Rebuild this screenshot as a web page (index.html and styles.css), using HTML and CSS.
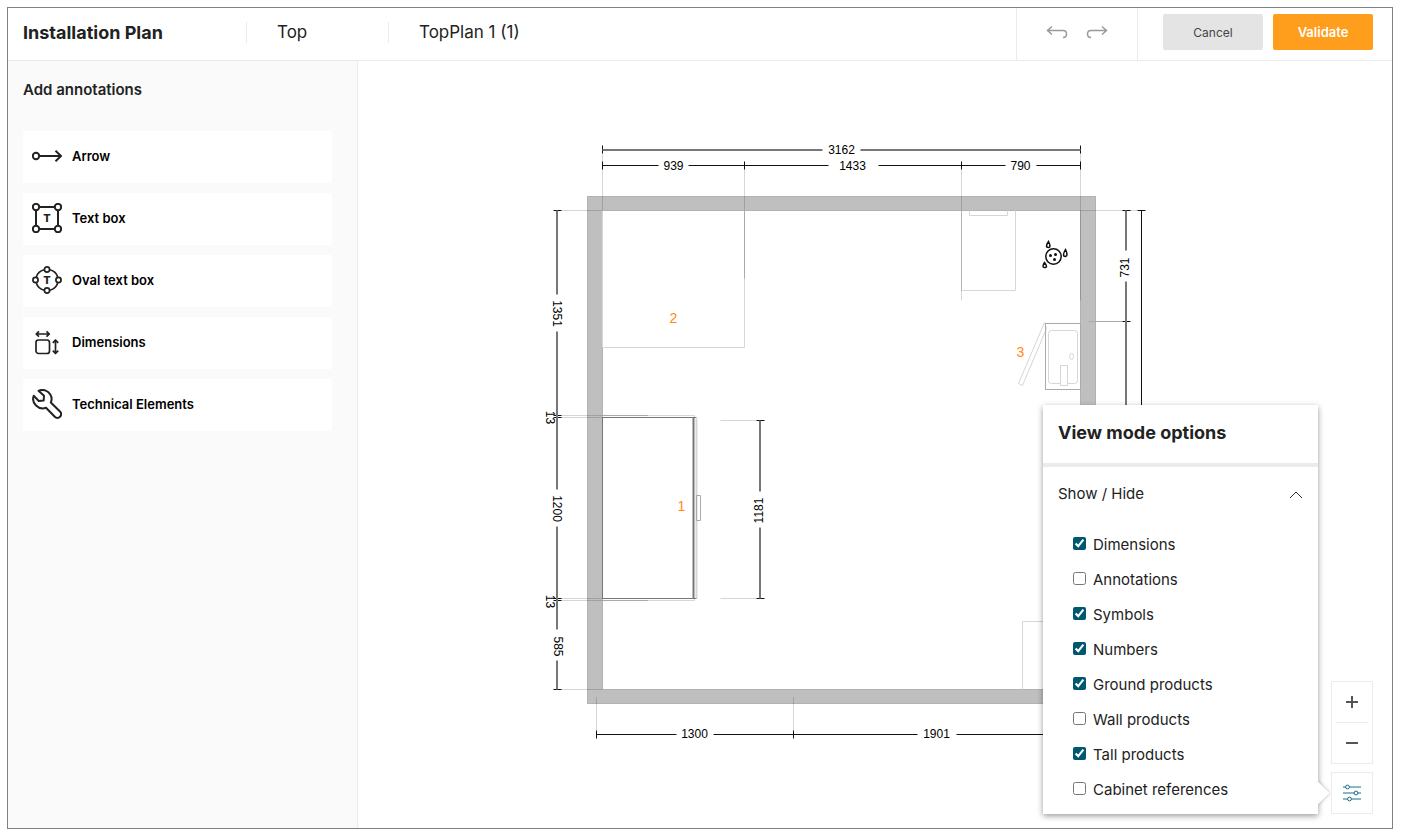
FILE: index.html
```html
<!DOCTYPE html>
<html lang="en">
<head>
    <meta charset="UTF-8">
    <meta name="viewport" content="width=device-width, initial-scale=1.0">
    <title>Installation Plan</title>
    <link rel="stylesheet" href="styles.css">
</head>
<body>
    <div class="app">
        <header class="topbar">
            <h1 class="topbar-title">Installation Plan</h1>
            <div class="topbar-view">Top</div>
            <div class="topbar-name">TopPlan 1 (1)</div>
            <div class="history">
                <button class="icon-btn" aria-label="Undo">
                    <svg width="22" height="14" viewBox="0 0 22 14"><path d="M6 1.500 L1.500 5.500 L6 9.500 M1.500 5.500 H17 Q20.500 5.500 20.500 9 Q20.500 12.500 17 12.500"/></svg>
                </button>
                <button class="icon-btn" aria-label="Redo">
                    <svg width="22" height="14" viewBox="0 0 22 14"><path d="M16 1.500 L20.500 5.500 L16 9.500 M20.500 5.500 H5 Q1.500 5.500 1.500 9 Q1.500 12.500 5 12.500"/></svg>
                </button>
            </div>
            <div class="actions">
                <button class="btn btn-cancel">Cancel</button>
                <button class="btn btn-validate">Validate</button>
            </div>
        </header>

        <div class="content">
            <aside class="sidebar">
                <h2>Add annotations</h2>
                <button class="tool">
                    <svg width="30" height="30" viewBox="0 0 30 30"><circle cx="4" cy="15" r="3.200"/><path d="M7.500 15 H29 M23.500 9.800 L29 15 L23.500 20.200"/></svg>
                    Arrow
                </button>
                <button class="tool">
                    <svg width="30" height="30" viewBox="0 0 30 30"><path d="M7.500 4 H22.500 M7.500 26 H22.500 M4 7.500 V22.500 M26 7.500 V22.500"/><circle cx="4" cy="4" r="3.200"/><circle cx="26" cy="4" r="3.200"/><circle cx="4" cy="26" r="3.200"/><circle cx="26" cy="26" r="3.200"/><text x="15" y="19">T</text></svg>
                    Text box
                </button>
                <button class="tool">
                    <svg width="30" height="30" viewBox="0 0 30 30"><g class="thin"><path d="M12 4.800 A11.500 10.500 0 0 0 4.300 12 M18 4.800 A11.500 10.500 0 0 1 25.700 12 M4.300 18 A11.500 10.500 0 0 0 12 25.200 M25.700 18 A11.500 10.500 0 0 1 18 25.200"/><circle cx="15" cy="4.500" r="2.600"/><circle cx="15" cy="25.500" r="2.600"/><circle cx="3.500" cy="15" r="2.600"/><circle cx="26.500" cy="15" r="2.600"/></g><text x="15" y="19">T</text></svg>
                    Oval text box
                </button>
                <button class="tool">
                    <svg width="30" height="30" viewBox="0 0 30 30"><g class="thin"><rect x="4" y="13" width="13.500" height="13.500" rx="2.500"/><path d="M4.500 7 H17 M7 4.300 L4.200 7 L7 9.700 M14.500 4.300 L17.300 7 L14.500 9.700 M23.500 13.500 V26 M20.800 15.800 L23.500 13 L26.200 15.800 M20.800 23.700 L23.500 26.500 L26.200 23.700"/></g></svg>
                    Dimensions
                </button>
                <button class="tool">
                    <svg width="30" height="30" viewBox="0 0 30 30"><path d="M6.500 1.800 C11 -0.200 16 1.500 18.300 5.500 C20 8.500 19.800 11.500 18.800 13.500 L28 22.500 C29.500 24 29.300 26.300 28 27.800 C26.500 29.300 24.200 29.200 22.800 27.800 L14 18.800 C10.500 20 6.500 19 4 16.500 C1 13.500 0.500 10 1.700 6.800 L6.800 12 L11.700 11.500 L12 6.800 Z"/></svg>
                    Technical Elements
                </button>
            </aside>

            <main class="stage">
                <!-- viewBox starts on a half pixel so that whole coordinates give sharp lines -->
                <svg class="plan" viewBox="357.500 60.500 1034 767" role="img" aria-label="Top view of the room">
                    <rect class="wall" x="594" y="203" width="494" height="493"/>
                    <path class="wall-edge" d="M587 196 H1095 V703 H587 Z M602 210 H1080 V689 H602 Z"/>

                    <!-- products -->
                    <g class="product">
                        <path d="M602 210 V347 H744 V210"/>
                        <path d="M961 210 V290 H1015 V210 M969 210 V215 H1007 V210"/>
                        <path d="M1022 689 V621 H1080"/>
                        <path d="M1044 322 L1046 328 L1022 385 L1018 383 Z"/>
                        <rect x="1048" y="330" width="29" height="53" rx="3"/>
                        <rect class="blank" x="1060" y="365" width="7" height="20"/>
                        <ellipse cx="1071" cy="356" rx="2" ry="3"/>
                        <path class="double" d="M696 418 V598"/>
                    </g>
                    <rect class="outline" x="1045" y="323" width="35" height="66"/>
                    <path class="outline" d="M602 415 H648 M602 600 H648 M744 210 V278 M696 495 H700 V520 H696 Z"/>
                    <path class="product" d="M648 415 H694 V417 M648 600 H694 V598"/>
                    <path class="cabinet" d="M602 417 H696 M602 598 H696 M602 417 V598"/>
                    <path class="cabinet-front" d="M693 417 V598"/>

                    <!-- extension lines -->
                    <path class="ext" d="M602 153 V210 M744 169 V210 M961 169 V300 M1080 153 V300 M561 210 H602 M561 415 H602 M561 417 H602 M561 598 H602 M561 600 H602 M561 689 H602 M720 420 H756 M720 598 H756 M596 697 V730 M793 697 V730 M1080 210 H1137"/>
                    <path class="outline" d="M1088 321 H1122"/>

                    <!-- dimension lines -->
                    <path class="dim" d="M602 165 H658 M688 165 H828 M878 165 H1005 M1036 165 H1080 M602 161 V169 M1080 161 V169 M602 145 V153 M1080 145 V153 M596 734 H676 M713 734 H917 M956 734 H1080 M596 730 V738 M1141 210 V440"/>
                    <path class="dim" d="M744 161 V169 M961 161 V169 M793 730 V738 M553 415 H561 M553 417 H561 M553 598 H561 M553 600 H561"/>
                    <path class="dim" d="M553 210 H561 M553 689 H561 M756 420 H764 M756 598 H764 M1122 210 H1130 M1137 210 H1145 M1122 321 H1130"/>
                    <path class="dim-soft" d="M602 149.500 H822 M860 149.500 H1080 M556.500 210 V294 M556.500 331 V489 M556.500 526 V629 M556.500 660 V689 M759.500 420 V491 M759.500 527 V598 M1125.500 210 V250 M1125.500 281 V440"/>

                    <g class="dim-text">
                        <text x="841" y="153">3162</text>
                        <text x="673" y="169">939</text>
                        <text x="852" y="169">1433</text>
                        <text x="1020" y="169">790</text>
                        <text x="694" y="737">1300</text>
                        <text x="936" y="737">1901</text>
                        <text transform="translate(552 313) rotate(90)">1351</text>
                        <text transform="translate(545 417) rotate(90)">13</text>
                        <text transform="translate(552 508) rotate(90)">1200</text>
                        <text transform="translate(545 601) rotate(90)">13</text>
                        <text transform="translate(553 646) rotate(90)">585</text>
                        <text transform="translate(762 510) rotate(-90)">1181</text>
                        <text transform="translate(1128 267) rotate(-90)">731</text>
                    </g>

                    <!-- water symbol -->
                    <g class="symbol">
                        <circle cx="1053" cy="256" r="7.700"/>
                        <path d="M1048 241 Q1044 247 1048 247 Q1051 247 1048 241 Z M1065 249 Q1061 256 1065 256 Q1068 255 1065 249 Z M1044 262 Q1041 267 1044 267 Q1048 267 1044 262 Z"/>
                        <g class="dots"><circle cx="1050" cy="255" r="1.500"/><circle cx="1055" cy="254" r="1.500"/><circle cx="1054" cy="259" r="1.500"/></g>
                    </g>

                    <g class="number">
                        <text x="681" y="510">1</text>
                        <text x="673" y="322">2</text>
                        <text x="1020" y="356">3</text>
                    </g>
                </svg>

                <section class="options">
                    <h2>View mode options</h2>
                    <button class="options-toggle" aria-expanded="true">
                        Show / Hide
                        <svg width="14" height="8" viewBox="0 0 14 8"><path d="M1 7 L7 1 L13 7"/></svg>
                    </button>
                    <div class="options-list">
                        <label><input type="checkbox" checked>Dimensions</label>
                        <label><input type="checkbox">Annotations</label>
                        <label><input type="checkbox" checked>Symbols</label>
                        <label><input type="checkbox" checked>Numbers</label>
                        <label><input type="checkbox" checked>Ground products</label>
                        <label><input type="checkbox">Wall products</label>
                        <label><input type="checkbox" checked>Tall products</label>
                        <label><input type="checkbox">Cabinet references</label>
                    </div>
                </section>

                <div class="controls">
                    <div class="zoom">
                        <button aria-label="Zoom in"><svg width="12" height="12" viewBox="0 0 12 12"><path d="M0 6 H12 M6 0 V12"/></svg></button>
                        <button aria-label="Zoom out"><svg width="12" height="12" viewBox="0 0 12 12"><path d="M0 6 H12"/></svg></button>
                    </div>
                    <button class="settings" aria-label="View mode options">
                        <svg width="20" height="18" viewBox="0 0 20 18"><path d="M1 3 H19 M1 9 H19 M1 15 H19"/><circle cx="5.500" cy="3" r="1.900"/><circle cx="14" cy="9" r="1.900"/><circle cx="7.500" cy="15" r="1.900"/></svg>
                    </button>
                </div>
            </main>
        </div>
    </div>
</body>
</html>
```
FILE: styles.css
```css
* {
    box-sizing: border-box;
}

body {
    margin: 0;
    padding: 7px 10px 10px 7px;
    background: #fff;
    color: #222;
    font-family: Inter, sans-serif;
    font-size: 15px;
}

h1, h2 {
    margin: 0;
}

button {
    font-family: inherit;
    color: inherit;
    border: none;
    background: none;
    padding: 0;
    cursor: pointer;
}

svg {
    display: block;
    fill: none;
    flex-shrink: 0;
}

.app {
    display: flex;
    flex-direction: column;
    min-height: calc(100vh - 17px);
    border: 1px solid #808080;
}

/* top bar */
.topbar {
    display: flex;
    align-items: center;
    height: 53px;
    border-bottom: 1px solid #ebebeb;
    font-size: 17px;
    line-height: 21px;
    padding: 0 19px 4px 0;
}

.topbar-title {
    width: 239px;
    padding-left: 15px;
    border-right: 1px solid #ebebeb;
    font-size: 18px;
    font-weight: 700;
}

.topbar-view {
    width: 142px;
    padding-left: 30px;
    border-right: 1px solid #ebebeb;
}

.topbar-name {
    flex: 1;
    padding-left: 30px;
}

.history {
    display: flex;
    align-items: center;
    justify-content: center;
    gap: 18px;
    width: 122px;
    height: 52px;
    margin-bottom: -4px;
    padding-bottom: 4px;
    border: solid #ebebeb;
    border-width: 0 1px;
}

.icon-btn svg {
    stroke: #999;
    stroke-width: 1.5;
}

.actions {
    display: flex;
    gap: 10px;
    padding-left: 25px;
}

.btn {
    width: 100px;
    height: 36px;
    border-radius: 2px;
    font-size: 12px;
}

.btn-cancel {
    background: #e4e4e4;
    color: #444;
}

.btn-validate {
    background: #ff9d1c;
    color: #fff;
    font-size: 13px;
    font-weight: 600;
}

.content {
    display: flex;
    flex: 1;
}

/* sidebar */
.sidebar {
    display: flex;
    flex-direction: column;
    gap: 10px;
    width: 350px;
    padding: 19px 25px 20px 15px;
    background: #fafafa;
    border-right: 1px solid #ebebeb;
}

.sidebar h2 {
    margin-bottom: 21px;
    font-size: 15px;
    line-height: 20px;
    font-weight: 600;
}

.tool {
    display: flex;
    align-items: center;
    gap: 10px;
    height: 52px;
    padding: 0 9px 3px;
    background: #fff;
    color: #000;
    font-size: 13px;
    font-weight: 600;
}

.tool svg {
    stroke: #222;
    stroke-width: 2;
    stroke-linejoin: round;
}

.tool svg .thin {
    stroke-width: 1.7;
}

.tool svg text {
    fill: #222;
    stroke: none;
    font-size: 11px;
    font-weight: 800;
    text-anchor: middle;
}

/* drawing area */
.stage {
    position: relative;
    flex: 1;
}

.plan {
    width: 100%;
}

.wall {
    stroke: #bfbfbf;
    stroke-width: 15;
}

.wall-edge {
    stroke: #b2b2b2;
}

.product {
    stroke: #d6d6d6;
}

.blank {
    fill: #fff;
}

.double {
    stroke-width: 2;
}

.outline {
    stroke: #aaa;
}

.cabinet {
    stroke: #777;
}

.cabinet-front {
    stroke: #777;
    stroke-width: 2;
}

.ext {
    stroke: #000;
    stroke-opacity: 0.16;
}

.dim {
    stroke: #111;
}

.dim-soft {
    stroke: #777;
    stroke-width: 2;
}

.dim-text {
    fill: #000;
    font-family: "Liberation Sans", sans-serif;
    font-size: 12px;
    text-anchor: middle;
}

.symbol {
    stroke: #111;
    stroke-width: 1.5;
}

.dots {
    fill: #111;
    stroke: none;
}

.number {
    fill: #ff8a14;
    font-family: "Liberation Sans", sans-serif;
    font-size: 14px;
    text-anchor: middle;
}

/* view mode popup */
.options {
    position: absolute;
    right: 74px;
    bottom: 14px;
    width: 275px;
    background: #fff;
    box-shadow: 0 2px 6px rgba(0, 0, 0, 0.4);
}

.options::after {
    content: "";
    position: absolute;
    right: -11px;
    bottom: 10px;
    width: 11px;
    height: 22px;
    background: #fff;
    clip-path: polygon(0 0, 100% 50%, 0 100%);
}

.options::before {
    content: "";
    position: absolute;
    right: -8px;
    bottom: 13px;
    width: 16px;
    height: 16px;
    background: #fff;
    box-shadow: 0 0 4px rgba(0, 0, 0, 0.3);
    transform: rotate(45deg);
    clip-path: polygon(-6px -6px, 22px -6px, 22px 22px);
}

.options h2 {
    padding: 17px 15px 19px;
    border-bottom: 4px solid #ebebeb;
    font-size: 18px;
    line-height: 22px;
    font-weight: 700;
}

.options-toggle {
    display: flex;
    align-items: center;
    justify-content: space-between;
    width: 100%;
    height: 55px;
    padding: 0 15px 2px;
    font-size: 15px;
}

.options-toggle svg {
    margin-top: 2px;
    stroke: #333;
}

.options-list {
    padding: 5px 30px 7px;
}

.options-list label {
    display: flex;
    align-items: center;
    gap: 7px;
    height: 35px;
}

.options-list input {
    width: 13px;
    height: 13px;
    margin: 0 0 2px;
    accent-color: #005870;
}

/* zoom and settings */
.controls {
    position: absolute;
    right: 19px;
    bottom: 14px;
    display: flex;
    flex-direction: column;
    gap: 8px;
}

.controls svg {
    margin: auto;
    stroke: #555;
    stroke-width: 2;
}

.zoom, .settings {
    width: 42px;
    border: 1px solid #ebebeb;
    background: #fff;
}

.zoom {
    padding: 0 4px 1px;
}

.zoom button {
    width: 100%;
    height: 40px;
    display: block;
}

.zoom button + button {
    height: 39px;
    border-top: 1px solid #ebebeb;
    box-sizing: content-box;
}

.settings {
    height: 42px;
}

.controls .settings svg {
    stroke: #186f87;
    stroke-width: 1;
}

.settings circle {
    fill: #fff;
}
```
